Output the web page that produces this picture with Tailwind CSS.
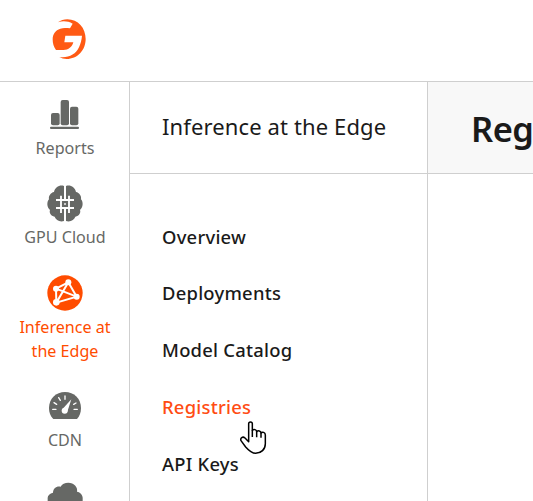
<!DOCTYPE html>
<html lang="en">
<head>
<meta charset="utf-8">
<title>Registries</title>
<script src="https://cdn.jsdelivr.net/npm/@tailwindcss/browser@4"></script>
</head>
<body class="h-[501px] w-[533px] overflow-hidden bg-white font-['Noto_Sans',sans-serif] text-[#1a1a1a]">
<div class="relative flex h-[501px] w-[533px] flex-col overflow-hidden">
  <header class="h-[82px] shrink-0 border-b border-[#cfcfcf] pt-[10px] pl-[40px]">
    <svg class="size-[60px]" viewBox="0 0 180 180">
      <path fill="#ff5a14" d="M54 37C62 31 72 28 82 28C114 28 137 54 137 87C137 121 112 147 80 147C72 147 64 145 58 141C86 144 107 134 117 112C122 101 125 89 126 77H76L73 97H100C96 111 86 120 70 120H48C41 111 38 100 38 88C38 73 46 60 61 56C70 53 79 54 90 55L98 41C84 33 68 32 54 37Z"/>
    </svg>
  </header>
  <div class="flex min-h-0 grow">
    <nav class="flex w-[130px] shrink-0 flex-col items-center border-r border-[#cfcfcf] text-center text-[16.1px] leading-6 text-[#666865]">
      <a class="flex h-[89px] shrink-0 flex-col items-center pt-[8px]">
        <svg class="h-[46px] w-[60px] shrink-0" viewBox="0 0 180 138" fill="#666865"><rect x="48" y="69" width="26" height="37" rx="6"/><rect x="77" y="30" width="25" height="76" rx="6"/><rect x="105" y="50" width="25" height="56" rx="6"/><rect x="45" y="110" width="87" height="7" rx="3"/></svg>
        <span class="pl-px">Reports</span>
      </a>
      <a class="flex h-[90px] shrink-0 flex-col items-center pt-[9px]">
        <svg class="h-[45px] w-[60px] shrink-0" viewBox="0 0 180 135">
          <path fill="#666865" d="M87 18V123C74 127 62 120 59 110C47 108 42 98 45 90C35 82 35 65 42 58C40 48 47 38 57 36C60 21 75 13 87 18ZM93 18C105 13 120 21 123 36C133 38 140 48 138 58C145 65 145 82 135 90C138 98 133 108 121 110C118 120 106 127 93 123Z"/>
          <path fill="none" stroke="#fff" stroke-width="5.5" d="M78 47V99M102 47V99M63 60H117M63 84H117"/>
          <path fill="none" stroke="#fff" stroke-width="4" d="M90 15V60M90 85V126"/>
          <rect x="81" y="63" width="18" height="18" fill="#666865"/><rect x="87" y="69" width="6" height="6" fill="#ccc"/>
        </svg>
        <span class="pl-px">GPU Cloud</span>
      </a>
      <a class="flex h-[113px] shrink-0 flex-col items-center pt-[9px] text-[#ff4c00]">
        <svg class="h-[45px] w-[60px] shrink-0" viewBox="0 0 180 135">
          <circle cx="90" cy="69" r="53" fill="#ff4c00"/>
          <path fill="none" stroke="#fff" stroke-width="6" d="M63 56L100 37L125 80L64 98L100 37M63 56L125 80M63 56L64 98"/>
          <g fill="#fff"><circle cx="63" cy="56" r="9"/><circle cx="100" cy="37" r="9"/><circle cx="125" cy="80" r="9"/><circle cx="64" cy="97" r="10"/></g>
        </svg>
        <span class="block pl-px">Inference at<br>the Edge</span>
      </a>
      <a class="flex h-[90px] shrink-0 flex-col items-center pt-[10px]">
        <svg class="h-[44px] w-[60px] shrink-0" viewBox="0 0 180 132">
          <path fill="#666865" d="M55 105C46 97 42 85 42 72C42 44 63 24 90 24C117 24 138 44 138 72C138 85 134 97 126 105Z"/>
          <path fill="none" stroke="#fff" stroke-width="4" stroke-linecap="round" d="M53 76H63M57 56L65 61M71 41L76 49M90 36V46M123 57L116 61M127 76H117"/>
          <path fill="#fff" d="M82 76L109 46L97 83Z"/><circle cx="89" cy="80" r="9" fill="#fff"/>
        </svg>
        <span class="pl-px">CDN</span>
      </a>
      <svg class="mt-[4px] h-[37px] w-[60px] shrink-0" viewBox="0 0 180 111"><path fill="#666865" d="M38 111V92C37 83 44 76 54 74C54 61 65 53 77 56C83 42 110 39 121 53C126 59 127 64 126 71C137 73 144 82 143 92V111Z"/></svg>
    </nav>
    <aside class="flex w-[298px] shrink-0 flex-col border-r border-[#cfcfcf]">
      <h2 class="flex h-[92px] shrink-0 items-center border-b border-[#cfcfcf] pb-[2px] pl-8 text-[22px] tracking-[0.12px] whitespace-nowrap">Inference at the Edge</h2>
      <div class="flex flex-col pt-[34px] pl-8 text-[18.4px] leading-7 font-medium tracking-[0.25px]">
        <a class="flex h-[57px] items-center">Overview</a>
        <a class="flex h-[56px] items-center">Deployments</a>
        <a class="flex h-[57px] items-center">Model Catalog</a>
        <a class="flex h-[57px] items-center text-[#ff4c13]">Registries</a>
        <a class="flex h-[57px] items-center">API Keys</a>
      </div>
    </aside>
    <main class="min-w-0 grow overflow-hidden">
      <h1 class="flex h-[92px] items-center border-b border-[#cfcfcf] bg-[#f8f8f8] pt-[2px] pl-[43px] text-[34.5px] font-semibold tracking-[-0.5px] whitespace-nowrap">Registries</h1>
    </main>
  </div>
  <svg class="absolute top-[415px] left-[235px] h-[45px] w-[40px]" viewBox="0 0 120 135"><path fill="#fff" stroke="#000" stroke-width="4.5" stroke-linejoin="round" d="M41 74V26C41 19 52 19 52 26V46C56 42 65 43 65 50C69 46 78 47 78 54C82 49 91 52 91 60V86C91 103 78 115 62 115C49 115 39 104 32 96L18 77C15 69 23 63 30 69L41 80Z"/><path fill="none" stroke="#000" stroke-width="4.5" d="M52 45V66M65 50V67M78 53V68"/></svg>
</div>
</body>
</html>
